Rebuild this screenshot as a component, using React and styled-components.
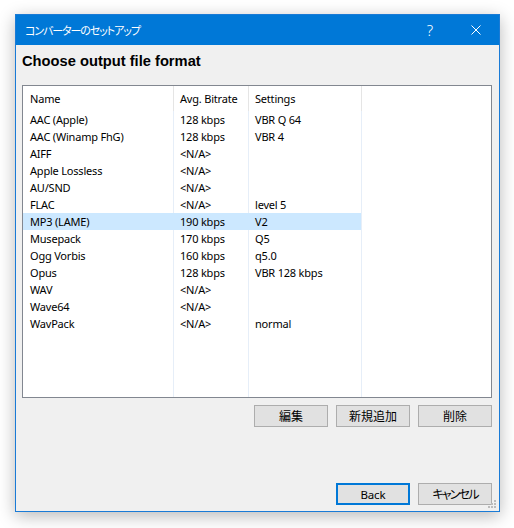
import React from 'react';
import styled, { createGlobalStyle } from 'styled-components';

const GlobalStyle = createGlobalStyle`
  html, body {
    margin: 0;
    padding: 0;
    background: #ffffff;
  }
  body {
    font-family: "Noto Sans", "Noto Sans CJK JP", sans-serif;
  }
`;

const formats = [
  { name: 'AAC (Apple)', bitrate: '128 kbps', settings: 'VBR Q 64' },
  { name: 'AAC (Winamp FhG)', bitrate: '128 kbps', settings: 'VBR 4' },
  { name: 'AIFF', bitrate: '<N/A>', settings: '' },
  { name: 'Apple Lossless', bitrate: '<N/A>', settings: '' },
  { name: 'AU/SND', bitrate: '<N/A>', settings: '' },
  { name: 'FLAC', bitrate: '<N/A>', settings: 'level 5' },
  { name: 'MP3 (LAME)', bitrate: '190 kbps', settings: 'V2', selected: true },
  { name: 'Musepack', bitrate: '170 kbps', settings: 'Q5' },
  { name: 'Ogg Vorbis', bitrate: '160 kbps', settings: 'q5.0' },
  { name: 'Opus', bitrate: '128 kbps', settings: 'VBR 128 kbps' },
  { name: 'WAV', bitrate: '<N/A>', settings: '' },
  { name: 'Wave64', bitrate: '<N/A>', settings: '' },
  { name: 'WavPack', bitrate: '<N/A>', settings: 'normal' },
];

const App = () => {
  return (
    <Page>
      <GlobalStyle />
      <Window>
        <TitleBar>
          <Title>コンバーターのセットアップ</Title>
          <CaptionButton>
            <HelpGlyph>?</HelpGlyph>
          </CaptionButton>
          <CaptionButton>
            <svg width="10" height="10" viewBox="0 0 10 10">
              <path d="M0.5 0.5 L9.5 9.5 M9.5 0.5 L0.5 9.5" stroke="#ffffff" strokeWidth="1" fill="none" />
            </svg>
          </CaptionButton>
        </TitleBar>

        <Content>
          <Heading>Choose output file format</Heading>

          <ListBox>
            <HeaderRow>
              <HeaderCell $first>Name</HeaderCell>
              <HeaderCell>Avg. Bitrate</HeaderCell>
              <HeaderCell>Settings</HeaderCell>
              <HeaderFiller />
            </HeaderRow>
            <ListBody>
              {formats.map((f) => (
                <Row key={f.name} $selected={f.selected}>
                  <Cell $first>{f.name}</Cell>
                  <Cell>{f.bitrate}</Cell>
                  <Cell>{f.settings}</Cell>
                </Row>
              ))}
            </ListBody>
          </ListBox>

          <ButtonRow>
            <Button>編集</Button>
            <Button>新規追加</Button>
            <Button>削除</Button>
          </ButtonRow>

          <Spacer />

          <ButtonRow>
            <Button $default>Back</Button>
            <Button $kana>キャンセル</Button>
          </ButtonRow>
        </Content>

        <Grip width="9" height="9" viewBox="0 0 9 9">
          <rect x="6" y="0" width="2" height="2" fill="#bcbcbc" />
          <rect x="3" y="3" width="2" height="2" fill="#bcbcbc" />
          <rect x="6" y="3" width="2" height="2" fill="#bcbcbc" />
          <rect x="0" y="6" width="2" height="2" fill="#bcbcbc" />
          <rect x="3" y="6" width="2" height="2" fill="#bcbcbc" />
          <rect x="6" y="6" width="2" height="2" fill="#bcbcbc" />
        </Grip>
      </Window>
    </Page>
  );
};

const Page = styled.div`
  padding: 14px 0 0 15px;
  width: 514px;
  height: 528px;
  box-sizing: border-box;
`;

const Window = styled.div`
  position: relative;
  width: 485px;
  height: 498px;
  box-sizing: border-box;
  border: 1px solid #1a7bd6;
  background: #f0f0f0;
  display: flex;
  flex-direction: column;
  box-shadow: 0 4px 16px rgba(0, 0, 0, 0.28);
`;

const TitleBar = styled.div`
  height: 30px;
  flex: none;
  background: #0078d7;
  display: flex;
  align-items: center;
  padding-left: 9px;
`;

const Title = styled.div`
  flex: 1;
  color: #ffffff;
  font-family: "Noto Sans CJK JP", sans-serif;
  font-feature-settings: "palt";
  font-size: 11px;
  letter-spacing: -1.1px;
  line-height: 30px;
`;

const CaptionButton = styled.div`
  width: 46px;
  height: 30px;
  display: flex;
  align-items: center;
  justify-content: center;
`;

const HelpGlyph = styled.span`
  color: #ffffff;
  font-family: "Noto Sans", sans-serif;
  font-size: 15px;
  font-weight: 300;
  line-height: 1;
`;

const Content = styled.div`
  flex: 1;
  display: flex;
  flex-direction: column;
  padding: 6px 7px 6px 6px;
`;

const Heading = styled.div`
  height: 20px;
  line-height: 20px;
  margin-bottom: 14px;
  font-family: "Liberation Sans", Arial, sans-serif;
  font-weight: bold;
  font-size: 14.7px;
  color: #000000;
`;

const ListBox = styled.div`
  height: 313px;
  box-sizing: border-box;
  border: 1px solid #828790;
  background: #ffffff;
  display: flex;
  flex-direction: column;
  overflow: hidden;
`;

const HeaderRow = styled.div`
  height: 25px;
  flex: none;
  display: grid;
  grid-template-columns: 151px 75px 113px 1fr;
`;

const HeaderCell = styled.div`
  border-right: 1px solid #e5e5e5;
  padding-left: ${(p) => (p.$first ? '7px' : '6px')};
  font-size: 11px;
  letter-spacing: -0.2px;
  line-height: 25px;
  color: #000000;
  white-space: nowrap;
`;

const HeaderFiller = styled.div``;

const ListBody = styled.div`
  flex: 1;
  background-image:
    linear-gradient(to right, transparent 150px, #e6eef8 150px, #e6eef8 151px, transparent 151px),
    linear-gradient(to right, transparent 225px, #e6eef8 225px, #e6eef8 226px, transparent 226px),
    linear-gradient(to right, transparent 338px, #e6eef8 338px, #e6eef8 339px, transparent 339px);
`;

const Row = styled.div`
  width: 338px;
  height: 17px;
  display: grid;
  grid-template-columns: 151px 75px 112px;
  background: ${(p) => (p.$selected ? '#cce8ff' : 'transparent')};
`;

const Cell = styled.div`
  padding-left: ${(p) => (p.$first ? '7px' : '6px')};
  font-size: 11px;
  letter-spacing: -0.2px;
  line-height: 17px;
  color: #000000;
  white-space: nowrap;
`;

const ButtonRow = styled.div`
  display: flex;
  justify-content: flex-end;
  gap: 8px;
  margin-top: 7px;
  &:last-child {
    margin-top: 0;
  }
`;

const Spacer = styled.div`
  flex: 1;
`;

const Button = styled.div`
  width: 74px;
  height: 22px;
  box-sizing: border-box;
  background: #e1e1e1;
  border: ${(p) => (p.$default ? '2px solid #0078d7' : '1px solid #adadad')};
  display: flex;
  align-items: center;
  justify-content: center;
  font-family: "Noto Sans", "Noto Sans CJK JP", sans-serif;
  font-feature-settings: "palt";
  font-size: ${(p) => (p.$default ? '11.5px' : '12px')};
  letter-spacing: ${(p) => (p.$default ? '-0.2px' : p.$kana ? '-1.8px' : '0')};
  color: #000000;
`;

const Grip = styled.svg`
  position: absolute;
  right: 2px;
  bottom: 2px;
`;

export default App;
